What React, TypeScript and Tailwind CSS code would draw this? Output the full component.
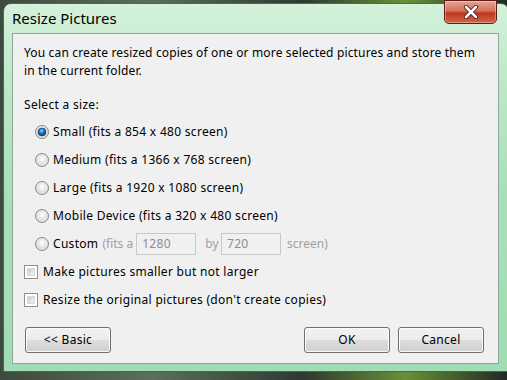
import React from "react";

const font = { fontFamily: '"Noto Sans", "Open Sans", sans-serif' };

function Radio({ checked }: { checked?: boolean }) {
  return (
    <svg width="14" height="14" viewBox="0 0 14 14" className="shrink-0">
      <defs>
        <radialGradient id="rg" cx="50%" cy="40%" r="60%">
          <stop offset="0%" stopColor="#ffffff" />
          <stop offset="100%" stopColor="#cfcfcf" />
        </radialGradient>
        <radialGradient id="dot" cx="45%" cy="35%" r="65%">
          <stop offset="0%" stopColor="#8fdcff" />
          <stop offset="50%" stopColor="#1c6fb8" />
          <stop offset="100%" stopColor="#0b3d78" />
        </radialGradient>
      </defs>
      <circle cx="7" cy="7" r="6.5" fill="url(#rg)" stroke="#8a8a8a" strokeWidth="1" />
      <circle cx="7" cy="7" r="5" fill="none" stroke="#e8e8e8" strokeWidth="1" />
      {checked && <circle cx="7" cy="7" r="4" fill="url(#dot)" stroke="#0f3f70" strokeWidth="0.6" />}
    </svg>
  );
}

function Check() {
  return (
    <div className="w-[14px] h-[14px] shrink-0 border border-[#8e8f8f] bg-white p-[2px]">
      <div className="w-full h-full bg-gradient-to-br from-[#cbcbcb] to-[#f4f4f4] border border-[#d8d8d8]" />
    </div>
  );
}

function Btn({ children, className = "" }: { children: React.ReactNode; className?: string }) {
  return (
    <div
      className={
        "w-[86px] h-[26px] rounded-[3px] border border-[#707070] bg-[linear-gradient(#f2f2f2_0%,#ebebeb_50%,#dddddd_50%,#cfcfcf_100%)] flex items-center justify-center text-[12px] text-black shadow-[inset_0_0_0_1px_#fbfbfb] " +
        className
      }
    >
      {children}
    </div>
  );
}

export default function App() {
  return (
    <div
      className="w-[507px] h-[380px] overflow-hidden bg-[linear-gradient(90deg,#3d4a3f_0%,#5a6f5c_30%,#2c3a30_60%,#6a8f3a_80%,#1f2a25_100%)]"
      style={font}
    >
      <div className="ml-[3px] mt-[3px] w-[506px] h-[369px] rounded-t-[8px] border border-[#4d6656] bg-[linear-gradient(180deg,#d4f1da_0%,#bfe9c9_20%,#a9dfbb_50%,#9fdcb4_100%)] flex flex-col relative">
        <div className="absolute right-[11px] top-[-4px] w-[53px] h-[24px] rounded-b-[5px] border border-[#5a1e16] bg-[linear-gradient(180deg,#e9a293_0%,#d6705c_45%,#c0361f_55%,#d3654a_100%)] flex items-center justify-center shadow-[inset_0_0_0_1px_rgba(255,255,255,0.35)]">
          <svg width="16" height="14" viewBox="0 0 16 14">
            <path d="M3 2 L13 12 M13 2 L3 12" stroke="#3a1410" strokeWidth="4.2" strokeLinecap="round" />
            <path d="M3 2 L13 12 M13 2 L3 12" stroke="#ffffff" strokeWidth="2.6" strokeLinecap="round" />
          </svg>
        </div>
        <div className="h-[29px] shrink-0 pl-[8px] pt-[4px] text-[15px] text-black leading-[20px]">Resize Pictures</div>
        <div className="ml-[8px] mr-[9px] h-[331px] shrink-0 border border-[#8fa89a] bg-[#f0f0f0] pl-[11px] pr-[14px] pt-[10px] text-[12px] text-black leading-[18px] tracking-[0.3px] flex flex-col">
          <div className="w-[455px] tracking-[0.15px]">
            You can create resized copies of one or more selected pictures and store them in the current folder.
          </div>
          <div className="mt-[16px]">Select a size:</div>
          <div className="mt-[9px] pl-[11px] flex flex-col gap-[10px]">
            <div className="flex items-center gap-[4px] h-[18px]"><Radio checked /><span>Small (fits a 854 x 480 screen)</span></div>
            <div className="flex items-center gap-[4px] h-[18px]"><Radio /><span>Medium (fits a 1366 x 768 screen)</span></div>
            <div className="flex items-center gap-[4px] h-[18px]"><Radio /><span>Large (fits a 1920 x 1080 screen)</span></div>
            <div className="flex items-center gap-[4px] h-[18px]"><Radio /><span>Mobile Device (fits a 320 x 480 screen)</span></div>
            <div className="flex items-center h-[18px]">
              <Radio />
              <span className="ml-[4px]">Custom</span>
              <span className="ml-[4px] text-[#a0a0a0] tracking-[0px]">(fits a</span>
              <div className="ml-[3px] w-[60px] h-[22px] border border-[#c8c8c8] bg-[#f0f0f0] text-[#8d8d8d] pl-[5px] flex items-center">1280</div>
              <span className="ml-[9px] text-[#a0a0a0]">by</span>
              <div className="ml-[2px] w-[60px] h-[22px] border border-[#c8c8c8] bg-[#f0f0f0] text-[#8d8d8d] pl-[5px] flex items-center">720</div>
              <span className="ml-[6px] text-[#a0a0a0] tracking-[0px]">screen)</span>
            </div>
          </div>
          <div className="mt-[10px] flex flex-col gap-[10px]">
            <div className="flex items-center gap-[5px] h-[18px]"><Check /><span>Make pictures smaller but not larger</span></div>
            <div className="flex items-center gap-[5px] h-[18px]"><Check /><span>Resize the original pictures (don't create copies)</span></div>
          </div>
          <div className="mt-[18px] flex">
            <Btn className="ml-[1px]">&lt;&lt; Basic</Btn>
            <div className="flex-1" />
            <Btn>OK</Btn>
            <Btn className="ml-[8px]">Cancel</Btn>
          </div>
        </div>
      </div>
    </div>
  );
}
